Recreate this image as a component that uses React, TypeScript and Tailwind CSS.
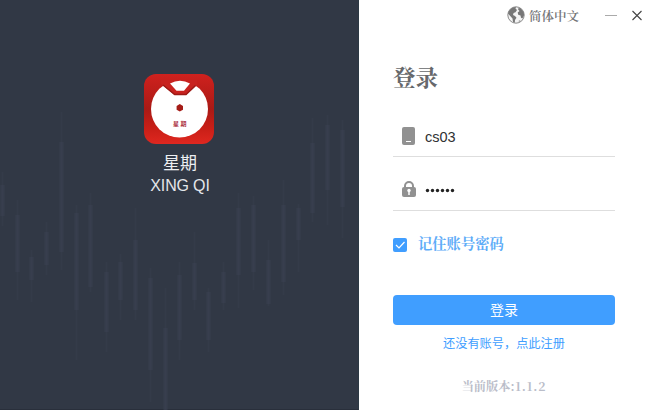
const candles: number[][] = [
  [2, 185, 216, 172, 226], [17, 215, 272, 200, 300], [31, 257, 280, 250, 302], [46, 232, 265, 222, 275],
  [61, 142, 252, 112, 270], [76, 213, 310, 205, 360], [90, 205, 287, 193, 292], [106, 272, 332, 262, 352],
  [120, 262, 300, 254, 320], [135, 240, 310, 208, 320], [150, 278, 370, 268, 402], [165, 328, 410, 288, 410],
  [179, 275, 340, 262, 360], [194, 263, 300, 232, 310], [208, 292, 340, 288, 352], [223, 272, 303, 262, 310],
  [238, 208, 275, 193, 308], [253, 205, 272, 196, 290], [268, 260, 304, 240, 306], [283, 205, 282, 180, 295],
  [298, 208, 240, 204, 272], [312, 143, 213, 118, 222], [327, 125, 190, 115, 225], [342, 130, 207, 120, 238],
];

function Candles() {
  return (
    <svg width="359" height="410" className="absolute inset-0" fill="#3b4152">
      {candles.map(([x, top, bottom, high, low]) => (
        <g key={x}>
          <rect x={x - 0.5} y={high} width="2" height={low - high} opacity="0.3" />
          <rect x={x - 2} y={top} width="5" height={bottom - top} opacity="0.3" />
          <rect x={x - 1} y={top} width="3" height={bottom - top} opacity="0.35" />
        </g>
      ))}
    </svg>
  );
}

function Logo() {
  return (
    <svg width="70" height="70" viewBox="0 0 70 70" className="block">
      <defs>
        <linearGradient id="red" x1="0" y1="0" x2="0" y2="1">
          <stop offset="0" stopColor="#cf211e" />
          <stop offset="0.5" stopColor="#aa1a15" />
          <stop offset="0.78" stopColor="#c91f17" />
          <stop offset="1" stopColor="#df2720" />
        </linearGradient>
      </defs>
      <rect width="70" height="70" rx="12" fill="url(#red)" />
      <circle cx="35.5" cy="35" r="28.5" fill="#fff" />
      <path d="M17 6h36v5L42 21H30.500L17 10z" fill="#c8221f" />
      <path d="M19 11 30.700 20.500H42L51.500 11.500" fill="none" stroke="#9c1a16" strokeWidth="1.400" />
      <path d="M26 9.500 32.500 16.800H40L46 9.500Q36 4 26 9.500Z" fill="#fff" />
      <path d="m35.800 30 3.200 1.900v3.800l-3.200 1.900-3.200-1.900v-3.800z" fill="#a51c17" />
      <text x="29" y="52" fontSize="6" fontWeight="700" letterSpacing="1.500" fill="#ad3546" fontFamily="Noto Sans CJK SC, sans-serif">星期</text>
    </svg>
  );
}

function Globe() {
  return (
    <svg width="18" height="18" viewBox="0 0 18 18" className="block">
      <circle cx="9" cy="9" r="8.200" fill="#f4f4f4" stroke="#8b8b8b" strokeWidth="1" />
      <path d="M1.500 6C3 2.500 6 1 9 1l-.5 1.500L10 4 8.500 6.200 6.600 7 6 9l2 1 1.500 1.800L8 14l-.2 2.800-1.800-.7-.5-3.500L3.200 10 1 7.500z" fill="#777" />
      <path d="m11.500 2 2.200.2 3 4 .4 3-1.700 3.300-1.400-.7-.5-2.300-2.300-.8-.5-2.300 1.800-1.500-1.400-1.300zM11.500 15l2.200-1-1.500 2z" fill="#777" />
    </svg>
  );
}

export default function App() {
  return (
    <div className="flex h-[410px] w-[650px] overflow-hidden bg-white font-['Liberation_Sans','Noto_Sans_CJK_SC',sans-serif]">
      <aside className="relative flex w-[359px] shrink-0 flex-col items-center border-r border-b border-r-[#2c3944] border-b-[#292f3b] bg-[#313845] pt-[74px]">
        <Candles />
        <div className="relative flex flex-col items-center">
          <Logo />
          <div className="mt-[9px] pl-[2px] text-[17px] leading-[22px] text-[#eceef1]">星期</div>
          <div className="mt-px pl-[2px] text-[16px] leading-[20px] tracking-[-0.01em] text-[#e4e6ea]">XING QI</div>
        </div>
      </aside>
      <main className="flex flex-1 flex-col">
        <header className="flex h-[30px] items-center justify-end pr-[7px]">
          <Globe />
          <span className="ml-1 mt-[2px] w-[52px] whitespace-nowrap font-['Noto_Serif_CJK_SC','Noto_Sans_CJK_SC',serif] text-[12.500px] font-semibold leading-4 text-[#727376]">简体中文</span>
          <svg width="38" height="12" viewBox="0 0 38 12" className="mt-px ml-6 block" fill="none">
            <path d="M0 5.500h12" stroke="#aaa" />
            <path d="m27.500 1 9 9m0-9-9 9" stroke="#444" strokeWidth="1.100" />
          </svg>
        </header>
        <form className="ml-[34px] flex w-[222px] flex-col">
          <h1 className="mt-[30px] h-8 font-['Noto_Serif_CJK_SC','Noto_Sans_CJK_SC',serif] text-[22.500px] font-bold leading-8 text-[#66686b]">登录</h1>
          <div className="mt-[25px] flex h-10 items-center border-b border-[#dedede] pl-[9px]">
            <svg width="13" height="18" viewBox="0 0 13 18" className="mt-[-1px] block shrink-0">
              <rect width="13" height="18" rx="2" fill="#919191" />
              <path d="M4 14.500h5" stroke="#fff" />
            </svg>
            <span className="ml-[10px] text-[14.500px] leading-5 text-[#303133]">cs03</span>
          </div>
          <div className="mt-[14px] flex h-10 items-center border-b border-[#dedede] pl-[9px]">
            <svg width="14" height="16" viewBox="0 0 14 16" className="mt-[-4px] block shrink-0">
              <path d="M3 7V5a4 4 0 0 1 8 0v2" fill="none" stroke="#919191" strokeWidth="2" />
              <rect y="6" width="14" height="10" rx="2" fill="#919191" />
              <circle cx="7" cy="9.500" r="1.700" fill="#fff" />
              <path d="M7 10v4" stroke="#fff" strokeWidth="1.500" />
            </svg>
            <svg width="30" height="6" viewBox="0 0 30 6" className="mt-[-2px] ml-[9px] block" fill="#222">
              {[2, 7, 12, 17, 22, 27].map((x) => <circle key={x} cx={x + 0.5} cy="3.500" r="1.700" />)}
            </svg>
          </div>
          <label className="mt-[21px] flex h-6 items-center">
            <svg width="14" height="14" viewBox="0 0 14 14" className="mt-[2px] block">
              <rect width="14" height="14" rx="2" fill="#409eff" />
              <path d="m3 7 3 3 5.500-6" fill="none" stroke="#fff" strokeWidth="1.200" />
            </svg>
            <span className="ml-[11px] mt-[-2px] font-['Noto_Serif_CJK_SC','Noto_Sans_CJK_SC',serif] text-[14.300px] font-bold leading-5 text-[#5eacf8]">记住账号密码</span>
          </label>
          <button type="button" className="mt-[39px] h-[30px] rounded bg-[#409eff] text-[14px] leading-[30px] text-white">登录</button>
          <a className="mt-[9px] h-5 text-center text-[12.200px] leading-5 text-[#409eff]">还没有账号，点此注册</a>
          <p className="mt-[22px] h-5 whitespace-nowrap text-center font-['Noto_Serif_CJK_SC','Noto_Sans_CJK_SC',serif] text-[12.200px] font-bold leading-5 text-[#babdc9]">当前版本<span className="tracking-[0.070em]">:1.1.2</span></p>
        </form>
      </main>
    </div>
  );
}
